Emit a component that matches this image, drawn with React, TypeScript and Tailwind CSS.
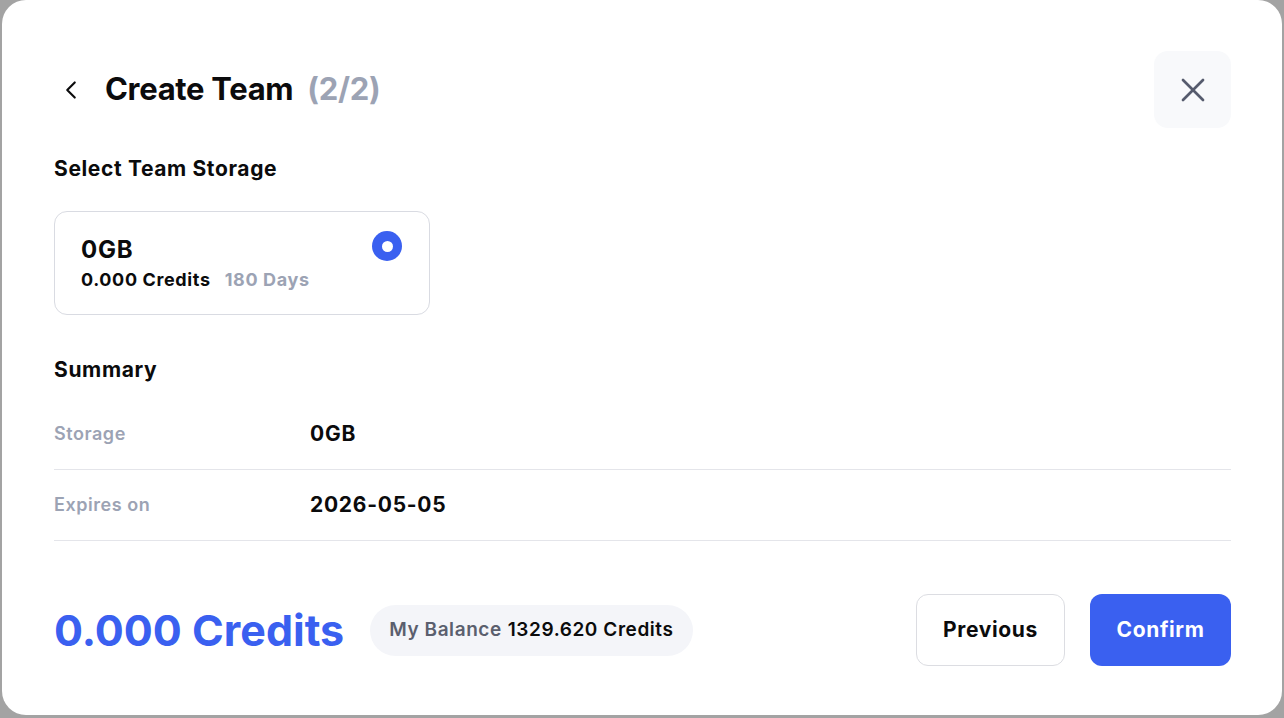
import { ChevronLeft, X } from "lucide-react";

const rows = [
  { label: "Storage", value: "0GB" },
  { label: "Expires on", value: "2026-05-05" },
];

export default function App() {
  return (
    <div
      className="flex h-[718px] w-[1284px] items-start justify-center overflow-hidden bg-[#a3a3a3]"
      style={{ fontFamily: "Inter, 'Noto Sans', sans-serif" }}
    >
      <div className="flex h-[715px] w-[1280px] flex-col rounded-[24px] bg-white pt-[51px] pr-[51px] pl-[52px] text-[#0b0b0c]">
        {/* header */}
        <div className="flex h-[77px] items-center justify-between">
          <div className="flex items-center">
            <ChevronLeft className="ml-[2px] h-[30px] w-[30px]" strokeWidth={1.7} />
            <h1 className="ml-[19px] text-[31px] font-bold tracking-[-0.01em]">
              Create Team
              <span className="ml-[14px] text-[#9ca3b4]">(2/2)</span>
            </h1>
          </div>
          <button className="flex h-[77px] w-[77px] items-center justify-center rounded-[14px] bg-[#f8f9fb] text-[#565b6d]">
            <X className="h-[40px] w-[40px]" strokeWidth={1.6} />
          </button>
        </div>

        <p className="mt-[27px] text-[21px] leading-[28px] font-bold tracking-[0.03em]">Select Team Storage</p>

        <div className="relative mt-[28px] flex h-[104px] w-[376px] flex-col justify-center rounded-[13px] border border-[#d9dbe2] px-[26px] pt-[2px]">
          <p className="text-[24px] leading-[28px] font-bold tracking-[0.03em]">0GB</p>
          <p className="mt-[4px] text-[18px] leading-[24px] font-bold tracking-[0.035em]">
            0.000 Credits
            <span className="ml-[14px] text-[#9ca3b4]">180 Days</span>
          </p>
          <span className="absolute top-[19px] right-[27px] flex h-[30px] w-[30px] items-center justify-center rounded-full bg-[#3a60f0]">
            <span className="h-[11px] w-[11px] rounded-full bg-white" />
          </span>
        </div>

        <p className="mt-[41px] text-[21px] leading-[28px] font-bold tracking-[0.03em]">Summary</p>

        <div className="mt-[15px]">
          {rows.map((r) => (
            <div key={r.label} className="flex h-[71px] items-center border-b border-[#e4e5ea] pb-px">
              <span className="w-[256px] text-[18px] font-semibold tracking-[0.03em] text-[#9ca3b4]">{r.label}</span>
              <span className="text-[21px] font-bold tracking-[0.035em]">{r.value}</span>
            </div>
          ))}
        </div>

        {/* footer */}
        <div className="mt-[53px] flex h-[72px] items-center justify-between">
          <div className="flex items-center">
            <span className="text-[43px] font-bold text-[#3a60f0]">0.000 Credits</span>
            <span className="ml-[26px] flex h-[51px] items-center rounded-full bg-[#f4f5f9] px-[19px] text-[19px] font-semibold tracking-[0.03em]">
              <span className="text-[#5b5f6e]">My Balance</span>
              <span className="ml-[6px]">1329.620 Credits</span>
            </span>
          </div>
          <div className="flex items-center gap-[25px]">
            <button className="h-[72px] w-[149px] rounded-[12px] border border-[#dcdde2] bg-white text-[21px] font-bold tracking-[0.03em]">
              Previous
            </button>
            <button className="h-[72px] w-[141px] rounded-[12px] bg-[#3a60f0] text-[21px] font-bold tracking-[0.03em] text-white">
              Confirm
            </button>
          </div>
        </div>
      </div>
    </div>
  );
}
